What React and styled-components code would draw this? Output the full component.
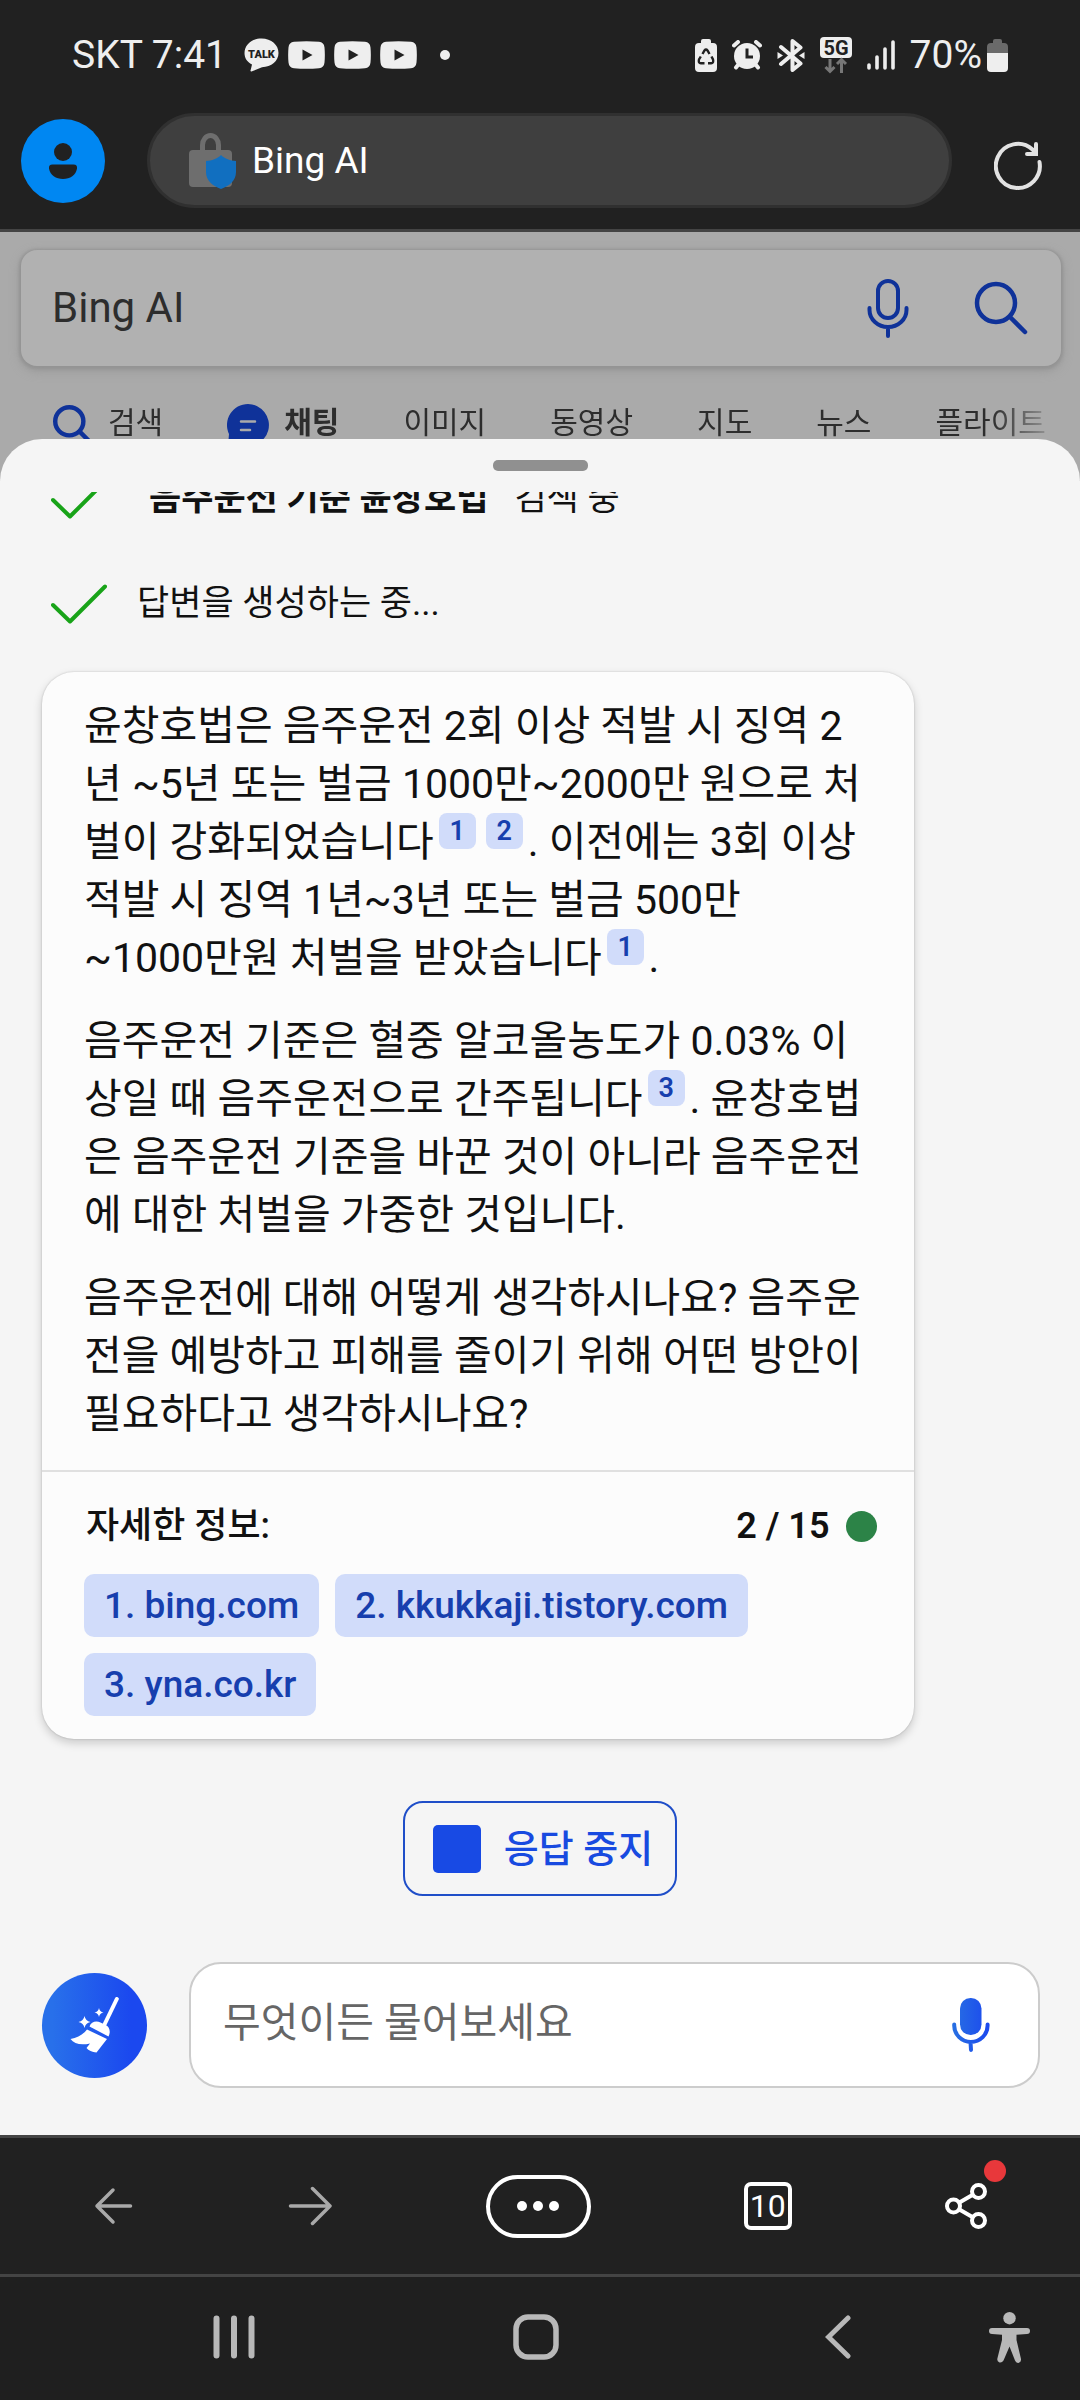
import styled, { createGlobalStyle } from "styled-components";

const GlobalStyle = createGlobalStyle`
  * {
    box-sizing: border-box;
  }

  body {
    margin: 0;
    background: #212121;
    font-family: Roboto, "Noto Sans CJK KR", sans-serif;
  }

  button {
    padding: 0;
    border: none;
    background: none;
    font: inherit;
    color: inherit;
    cursor: pointer;
  }

  svg {
    display: block;
    flex-shrink: 0;
  }
`;

const Screen = styled.div`
  display: flex;
  flex-direction: column;
  height: 100vh;
  overflow: hidden;
`;

const Header = styled.header`
  background: #212121;
  border-bottom: 3px solid #444444;
`;

const StatusBar = styled.div`
  display: flex;
  align-items: center;
  justify-content: space-between;
  height: 110px;
  padding: 0 72px;
  color: #eeeeee;
  font-size: 39px;
`;

const StatusGroup = styled.div`
  display: flex;
  align-items: center;
  gap: ${(props) => props.$gap}px;
`;

const Carrier = styled.span`
  margin-right: 8px;
`;

const Dot = styled.span`
  width: ${(props) => props.$size}px;
  height: ${(props) => props.$size}px;
  border-radius: 50%;
  background: ${(props) => props.$color};
`;

const MoreDot = styled(Dot)`
  margin-left: 14px;
`;

const AddressBar = styled.div`
  display: flex;
  align-items: center;
  gap: 42px;
  padding: 3px 38px 21px 21px;
`;

const Avatar = styled.button`
  display: flex;
  align-items: center;
  justify-content: center;
  width: 84px;
  height: 84px;
  border-radius: 50%;
  background: #0087f2;
`;

const Address = styled.button`
  display: flex;
  flex: 1;
  align-items: center;
  gap: 16px;
  height: 95px;
  padding: 0 39px;
  border: 3px solid #303030;
  border-radius: 48px;
  background: #3f3f3f;
  color: #ffffff;
  font-size: 37px;
`;

const RefreshButton = styled.button`
  padding-top: 9px;
`;

const SearchPage = styled.section`
  padding: 18px 19px 0 21px;
  background: #aaaaaa;
`;

const SearchForm = styled.form`
  display: flex;
  align-items: center;
  height: 116px;
  padding: 0 33px 0 31px;
  border-radius: 16px;
  background: #b1b1b1;
  box-shadow: 0 1px 3px 2px #949494, 0 4px 12px #969696;
`;

const SearchInput = styled.input`
  flex: 1;
  min-width: 0;
  padding: 0 0 2px;
  border: none;
  outline: none;
  background: none;
  color: #2d2d2d;
  font: inherit;
  font-size: 42px;
`;

const SearchButtons = styled.div`
  display: flex;
  align-items: center;
  gap: 65px;
`;

const Tabs = styled.nav`
  display: flex;
  align-items: center;
  gap: 64px;
  height: 114px;
  padding: 0 15px 0 32px;
  overflow: hidden;
  mask-image: linear-gradient(to right, #000 calc(100% - 70px), transparent);
`;

const Tab = styled.a`
  display: flex;
  flex-shrink: 0;
  align-items: center;
  gap: ${(props) => props.$gap || 0}px;
  color: #2d2d2d;
  font-size: 30px;
  font-weight: ${(props) => (props.$active ? 700 : 400)};
  line-height: 40px;
  text-decoration: none;

  svg {
    margin-top: 4px;
  }
`;

const Sheet = styled.main`
  position: relative;
  display: flex;
  flex: 1;
  flex-direction: column;
  min-height: 0;
  margin-top: -41px;
  padding-top: 21px;
  border-radius: 42px 42px 0 0;
  background: #f5f5f5;
`;

const Handle = styled.div`
  align-self: center;
  width: 95px;
  height: 11px;
  margin-bottom: 21px;
  border-radius: 5px;
  background: #909090;
`;

const Conversation = styled.div`
  display: flex;
  flex: 1;
  flex-direction: column;
  justify-content: flex-end;
  min-height: 0;
  padding: 0 42px 42px;
  overflow: hidden;
`;

const Progress = styled.div`
  display: flex;
  flex-shrink: 0;
  align-items: center;
  gap: ${(props) => props.$gap}px;
  height: 105px;
  padding-left: 9px;
  color: #111111;
  font-size: 35px;
`;

const Answer = styled.article`
  width: 87.5%;
  flex-shrink: 0;
  margin-top: 20px;
  border-radius: 32px;
  background: #fcfcfc;
  box-shadow: 0 0 2px rgba(0, 0, 0, 0.2), 0 4px 10px rgba(0, 0, 0, 0.18);
`;

const AnswerBody = styled.div`
  padding: 25px 42px 27px;
  color: #111111;
`;

const Paragraph = styled.p`
  margin: 0 0 25px;
  font-size: 41px;
  line-height: 58px;
  word-break: break-all;

  &:last-child {
    margin-bottom: 0;
  }
`;

const Amount = styled.span`
  white-space: nowrap;
`;

const Citation = styled.a`
  display: inline-block;
  width: 37px;
  margin: 0 5px;
  border-radius: 8px;
  background: #d1dcfa;
  color: #173fae;
  font-size: 27px;
  font-weight: 600;
  line-height: 36px;
  text-align: center;
  text-decoration: none;
  vertical-align: top;
`;

const Sources = styled.footer`
  padding: 32px 37px 23px 42px;
  border-top: 2px solid #e0e0e0;
`;

const SourcesTitle = styled.div`
  display: flex;
  align-items: center;
  justify-content: space-between;
  margin-bottom: 26px;
  padding-left: 2px;
  color: #111111;
  font-size: 36px;
  font-weight: 500;
  line-height: 44px;
`;

const Counter = styled.span`
  display: flex;
  align-items: center;
  gap: 16px;
  font-weight: 600;
`;

const Chips = styled.div`
  display: flex;
  flex-wrap: wrap;
  gap: 16px;
`;

const Chip = styled.a`
  padding: 0 20px;
  border-radius: 10px;
  background: #d1dcfa;
  color: #173fae;
  font-size: 37px;
  font-weight: 500;
  line-height: 63px;
  text-decoration: none;
`;

const StopButton = styled.button`
  display: flex;
  flex-shrink: 0;
  align-self: center;
  align-items: center;
  gap: 23px;
  height: 95px;
  margin-top: 62px;
  padding: 0 22px 0 28px;
  border: 2px solid #1f4ec8;
  border-radius: 20px;
  color: #184ae0;
  font-size: 38px;
  font-weight: 500;
  line-height: 48px;
`;

const StopSquare = styled.span`
  width: 48px;
  height: 48px;
  border-radius: 5px;
  background: #184ae4;
`;

const Composer = styled.form`
  display: flex;
  align-items: center;
  gap: 42px;
  padding: 24px 40px 47px 42px;
`;

const BroomButton = styled.button`
  display: flex;
  align-items: center;
  justify-content: center;
  width: 105px;
  height: 105px;
  border-radius: 50%;
  background: linear-gradient(90deg, #2870ea 10%, #1b48ef 85%);
`;

const Prompt = styled.div`
  display: flex;
  flex: 1;
  align-items: center;
  height: 126px;
  padding: 0 48px 0 32px;
  border: 2px solid #cccccc;
  border-radius: 32px;
  background: #ffffff;
`;

const PromptInput = styled.input`
  flex: 1;
  min-width: 0;
  padding: 0 0 4px;
  border: none;
  outline: none;
  background: none;
  font: inherit;
  font-size: 41px;

  &::placeholder {
    color: #666666;
    opacity: 1;
  }
`;

const Toolbar = styled.nav`
  display: flex;
  align-items: center;
  justify-content: space-between;
  height: 139px;
  padding: 0 91px;
  border-top: 3px solid #444444;
  background: #212121;
`;

const MenuButton = styled.button`
  display: flex;
  align-items: center;
  justify-content: center;
  gap: 6px;
  width: 105px;
  height: 63px;
  border: 4px solid #ffffff;
  border-radius: 32px;
`;

const TabCount = styled.button`
  width: 48px;
  height: 48px;
  border: 4px solid #ffffff;
  border-radius: 7px;
  color: #ffffff;
  font-size: 32px;
  line-height: 40px;
`;

const ShareButton = styled.button`
  position: relative;
`;

const Badge = styled(Dot)`
  position: absolute;
  top: -23px;
  right: -17px;
`;

const SystemNav = styled.nav`
  display: flex;
  align-items: center;
  height: 126px;
  padding: 0 50px 3px 83px;
  border-top: 3px solid #444444;
  background: #1f1f1f;
`;

const NavButton = styled.button`
  display: flex;
  flex: 1;
  justify-content: center;
`;

const BLUE = "#0f3299";

function TalkIcon() {
  return (
    <svg width="35" height="34" viewBox="0 0 35 34" fill="#eeeeee">
      <path d="M17.500 0.500C27.500 0.500 34.500 7 34.500 15C34.500 23 27.500 29 18 29.200L7.500 33.500C6.500 33.500 6.200 32.500 6.800 31.500L8 26.500C3 24 0.500 20 0.500 15C0.500 7 7.500 0.500 17.500 0.500Z" />
      <text x="17.500" y="19.500" fill="#212121" fontSize="11" fontWeight="900" textAnchor="middle">
        TALK
      </text>
    </svg>
  );
}

function VideoIcon() {
  return (
    <svg width="37" height="28" viewBox="0 0 37 28">
      <path fill="#eeeeee" d="M6 0.800Q18.500-0.300 31 0.800Q36 1.200 36.500 6.500Q37.200 14 36.500 21.500Q36 26.800 31 27.200Q18.500 28.300 6 27.200Q1 26.800 0.500 21.500Q-0.200 14 0.500 6.500Q1 1.200 6 0.800Z" />
      <path fill="#212121" d="M14.500 8.500L24.500 14L14.500 19.500Z" />
    </svg>
  );
}

function BatterySaverIcon() {
  return (
    <svg width="22" height="33" viewBox="0 0 22 33">
      <path fill="#eeeeee" d="M6 4V2Q6 0 8 0H14Q16 0 16 2V4H18Q22 4 22 8V29Q22 33 18 33H4Q0 33 0 29V8Q0 4 4 4Z" />
      <g fill="none" stroke="#212121" strokeWidth="2.400">
        <path d="M7.500 15L9.500 11.500Q11 9.500 12.500 11.500L14.500 15" />
        <path d="M16.500 17.500L18 20.500Q19 24 16 24.300H13" />
        <path d="M9.500 24.300H6Q3 24 4 20.500L5.800 17.500" />
      </g>
    </svg>
  );
}

function AlarmIcon() {
  return (
    <svg width="30" height="30" viewBox="0 0 30 30">
      <circle cx="15" cy="16" r="13" fill="#eeeeee" />
      <g stroke="#eeeeee" strokeWidth="4" strokeLinecap="round">
        <path d="M2 5.500L6 2M28 5.500L24 2M6 25L4 27.500M24 25L26 27.500" />
      </g>
      <path d="M15 8.500V17H21" fill="none" stroke="#212121" strokeWidth="3" />
    </svg>
  );
}

function BluetoothIcon() {
  return (
    <svg width="28" height="33" viewBox="0 0 28 33">
      <path
        d="M4 8L23.500 24.500L15.500 31V2L23.500 8.500L4 25"
        fill="none"
        stroke="#eeeeee"
        strokeWidth="4"
        strokeLinecap="round"
        strokeLinejoin="round"
      />
      <path fill="#eeeeee" d="M0.500 13L6 16.500L0.500 20ZM27.500 13L22 16.500L27.500 20Z" />
    </svg>
  );
}

function NetworkIcon() {
  return (
    <svg width="32" height="37" viewBox="0 0 32 37">
      <rect width="32" height="21" rx="4" fill="#eeeeee" />
      <text x="16" y="17.500" fill="#212121" fontSize="20" fontWeight="700" textAnchor="middle">
        5G
      </text>
      <path
        d="M10 22V34M5.500 30L10 34.500L14.500 30M21.500 36V23M17 27L21.500 22.500L26 27"
        fill="none"
        stroke="#777777"
        strokeWidth="3"
      />
    </svg>
  );
}

function SignalIcon() {
  return (
    <svg width="28" height="30" viewBox="0 0 28 30" stroke="#eeeeee" strokeWidth="3.600" strokeLinecap="round">
      <path d="M2 25V28M10 17V28M18 9V28M26 2V28" />
    </svg>
  );
}

function BatteryIcon() {
  return (
    <svg width="21" height="33" viewBox="0 0 21 33">
      <path fill="#6a6a6a" d="M6 4V2Q6 0 8 0H13Q15 0 15 2V4H17Q21 4 21 8V14H0V8Q0 4 4 4Z" />
      <path fill="#eeeeee" d="M0 14H21V29Q21 33 17 33H4Q0 33 0 29Z" />
    </svg>
  );
}

function PersonIcon() {
  return (
    <svg width="30" height="36" viewBox="0 0 30 36" fill="#212121">
      <circle cx="15" cy="9" r="9" />
      <path d="M4.500 21.500H25.500Q29.500 21.500 29 25.500C28 32 22 36 15 36S2 32 1 25.500Q0.500 21.500 4.500 21.500Z" />
    </svg>
  );
}

function LockIcon() {
  return (
    <svg width="47" height="56" viewBox="0 0 47 56">
      <path d="M13.500 19V12A8 9.500 0 0 1 29.500 12V19" fill="none" stroke="#6e6e6e" strokeWidth="5" />
      <rect y="17" width="43" height="37" rx="4" fill="#6e6e6e" />
      <path d="M32 22C36 26 41 27.500 47 28V39C47 48 40 53 32 56C24 53 17 48 17 39V28C23 27.500 28 26 32 22Z" fill="#116fc0" />
    </svg>
  );
}

function RefreshIcon() {
  return (
    <svg width="48" height="50" viewBox="0 0 48 50" fill="none" stroke="#e2e2e2" strokeWidth="4" strokeLinecap="round">
      <path d="M45.500 22A22 22 0 1 1 38.500 9.500L42 13" />
      <path d="M42 4V14H33" />
    </svg>
  );
}

function MicIcon() {
  return (
    <svg width="42" height="59" viewBox="0 0 42 59" fill="none" stroke={BLUE} strokeWidth="4" strokeLinecap="round">
      <rect x="11" y="2" width="20" height="37" rx="10" />
      <path d="M2.500 29V31A18.500 17 0 0 0 39.500 31V29M21 48V57" />
    </svg>
  );
}

function SearchIcon({ size }) {
  return (
    <svg width={size} height={size} viewBox="0 0 54 54" fill="none" stroke={BLUE} strokeWidth={size < 54 ? 6 : 4.5} strokeLinecap="round">
      <circle cx="22" cy="22" r="19" />
      <path d="M36 36L51 51" />
    </svg>
  );
}

function ChatIcon() {
  return (
    <svg width="42" height="42" viewBox="0 0 42 42">
      <path d="M21 0A21 21 0 1 1 11 39.500L1 42L2 30A21 21 0 0 1 21 0Z" fill={BLUE} />
      <path d="M14 17.500H28M14 26H23" stroke="#aaaaaa" strokeWidth="2.500" strokeLinecap="round" />
    </svg>
  );
}

function CheckIcon() {
  return (
    <svg width="56" height="48" viewBox="0 0 56 48" fill="none" stroke="#18a318" strokeWidth="4" strokeLinecap="round" strokeLinejoin="round">
      <path d="M2 29L19 45.500L54 10.500" />
    </svg>
  );
}

function BroomIcon() {
  return (
    <svg width="50" height="56" viewBox="0 0 50 56" fill="#ffffff">
      <path d="M46.800 2L34.500 27.500" stroke="#ffffff" strokeWidth="4" strokeLinecap="round" />
      <path d="M19.500 29.500C21 24.500 26.500 23.500 30.500 25.500L36 28.200C39.500 30 41 34.500 38.500 39.500Z" />
      <path d="M17 32.500L37 42L26.500 55.500C22 55.300 18.500 53.500 16.500 51L20 46.500C11 48.500 4 47 0.500 42C7.500 41 13 37.500 17 32.500Z" />
      <path d="M14.500 19Q15.500 24 20.500 25Q15.500 26 14.500 31Q13.500 26 8.500 25Q13.500 24 14.500 19Z" />
      <path d="M29 11Q29.700 14.800 33.500 15.500Q29.700 16.200 29 20Q28.300 16.200 24.500 15.500Q28.300 14.800 29 11Z" />
    </svg>
  );
}

function VoiceIcon() {
  return (
    <svg width="38" height="54" viewBox="0 0 38 54">
      <defs>
        <linearGradient id="voice" x1="0" x2="38" y1="0" y2="0" gradientUnits="userSpaceOnUse">
          <stop stopColor="#2870e2" />
          <stop offset="1" stopColor="#1b48ef" />
        </linearGradient>
      </defs>
      <rect x="8" width="21.500" height="37" rx="10.500" fill="url(#voice)" />
      <path d="M2.200 26.500V27.500A16.700 16.500 0 0 0 35.600 27.500V26.500M18.500 44L19 52" fill="none" stroke="url(#voice)" strokeWidth="4" strokeLinecap="round" />
    </svg>
  );
}

function BackIcon() {
  return (
    <svg width="44" height="44" viewBox="0 0 44 44" fill="none" stroke="#a9a9a9" strokeWidth="3.500" strokeLinecap="round" strokeLinejoin="round">
      <path d="M39.500 22H6M22 6L6 22L22 38" />
    </svg>
  );
}

function ForwardIcon() {
  return (
    <svg width="44" height="44" viewBox="0 0 44 44" fill="none" stroke="#a9a9a9" strokeWidth="3.500" strokeLinecap="round" strokeLinejoin="round">
      <path d="M2.500 22H42M24.500 4.500L42 22L24.500 39.500" />
    </svg>
  );
}

function ShareIcon() {
  return (
    <svg width="44" height="46" viewBox="0 0 44 46" fill="none" stroke="#ffffff" strokeWidth="4">
      <circle cx="8.500" cy="23" r="6.500" />
      <circle cx="33.500" cy="8.500" r="6.500" />
      <circle cx="33.500" cy="37.500" r="6.500" />
      <path d="M14 19.800L27.800 11.800M14 26.200L27.800 34.200" />
    </svg>
  );
}

function RecentsIcon() {
  return (
    <svg width="42" height="44" viewBox="0 0 42 44" stroke="#b8b8b8" strokeWidth="6" strokeLinecap="round">
      <path d="M3.500 3.500V40.500M21 3.500V40.500M38.500 3.500V40.500" />
    </svg>
  );
}

function HomeIcon() {
  return (
    <svg width="46" height="46" viewBox="0 0 46 46" fill="none" stroke="#b8b8b8" strokeWidth="5.500">
      <rect x="3" y="3" width="40" height="40" rx="12" />
    </svg>
  );
}

function PreviousIcon() {
  return (
    <svg width="26" height="44" viewBox="0 0 26 44" fill="none" stroke="#b8b8b8" strokeWidth="5" strokeLinecap="round">
      <path d="M23 3L3.500 22L23 41" />
    </svg>
  );
}

function AccessibilityIcon() {
  return (
    <svg width="41" height="51" viewBox="0 0 41 51" fill="#b8b8b8">
      <circle cx="20.500" cy="6.200" r="6.200" />
      <path d="M3 16H38Q41 16 41 19Q41 22 38 22L27.500 22.700V28L32 47Q32.500 50 29.500 51Q27 51 26 48.500L20.500 34.500L14.500 48.500Q13 51 10.500 50.500Q7.500 49.500 8.500 46L13 28V22.700L3 22Q0 22 0 19Q0 16 3 16Z" />
    </svg>
  );
}

const tabs = ["이미지", "동영상", "지도", "뉴스", "플라이트"];
const sources = ["bing.com", "kkukkaji.tistory.com", "yna.co.kr"];

export default function App() {
  return (
    <>
      <GlobalStyle />
      <Screen>
        <Header>
          <StatusBar>
            <StatusGroup $gap={9}>
              <Carrier>SKT 7:41</Carrier>
              <TalkIcon />
              <VideoIcon />
              <VideoIcon />
              <VideoIcon />
              <MoreDot $size={10} $color="#eeeeee" />
            </StatusGroup>
            <StatusGroup $gap={15}>
              <BatterySaverIcon />
              <AlarmIcon />
              <BluetoothIcon />
              <NetworkIcon />
              <SignalIcon />
              <StatusGroup $gap={5}>
                <span>70%</span>
                <BatteryIcon />
              </StatusGroup>
            </StatusGroup>
          </StatusBar>
          <AddressBar>
            <Avatar aria-label="프로필">
              <PersonIcon />
            </Avatar>
            <Address>
              <LockIcon />
              Bing AI
            </Address>
            <RefreshButton aria-label="새로 고침">
              <RefreshIcon />
            </RefreshButton>
          </AddressBar>
        </Header>

        <SearchPage>
          <SearchForm>
            <SearchInput aria-label="검색어" defaultValue="Bing AI" />
            <SearchButtons>
              <button type="button" aria-label="음성 검색">
                <MicIcon />
              </button>
              <button type="button" aria-label="검색">
                <SearchIcon size={54} />
              </button>
            </SearchButtons>
          </SearchForm>
          <Tabs>
            <Tab href="#" $gap={15}>
              <SearchIcon size={40} />
              검색
            </Tab>
            <Tab href="#" $gap={15} $active>
              <ChatIcon />
              채팅
            </Tab>
            {tabs.map((tab) => (
              <Tab href="#" key={tab}>
                {tab}
              </Tab>
            ))}
          </Tabs>
        </SearchPage>

        <Sheet>
          <Handle />
          <Conversation>
            <Progress $gap={42}>
              <CheckIcon />
              <StatusGroup $gap={26}>
                <b>음주운전 기준 윤창호법</b>
                <span>검색 중</span>
              </StatusGroup>
            </Progress>
            <Progress $gap={30}>
              <CheckIcon />
              <span>답변을 생성하는 중...</span>
            </Progress>

            <Answer>
              <AnswerBody>
                <Paragraph>
                  윤창호법은 음주운전 2회 이상 적발 시 징역 2년 ~5년 또는 벌금
                  1000만~2000만 원으로 처벌이 강화되었습니다
                  <Citation href="#">1</Citation>
                  <Citation href="#">2</Citation>. 이전에는 3회 이상 적발 시 징역
                  1년~3년 또는 벌금 500만
                  <wbr />
                  <Amount>~1000만원</Amount> 처벌을 받았습니다
                  <Citation href="#">1</Citation>.
                </Paragraph>
                <Paragraph>
                  음주운전 기준은 혈중 알코올농도가 0.03% 이상일 때 음주운전으로
                  간주됩니다
                  <Citation href="#">3</Citation>. 윤창호법은 음주운전 기준을 바꾼
                  것이 아니라 음주운전에 대한 처벌을 가중한 것입니다.
                </Paragraph>
                <Paragraph>
                  음주운전에 대해 어떻게 생각하시나요? 음주운전을 예방하고 피해를
                  줄이기 위해 어떤 방안이 필요하다고 생각하시나요?
                </Paragraph>
              </AnswerBody>
              <Sources>
                <SourcesTitle>
                  자세한 정보:
                  <Counter>
                    2 / 15
                    <Dot $size={31} $color="#2c8347" />
                  </Counter>
                </SourcesTitle>
                <Chips>
                  {sources.map((source, i) => (
                    <Chip href="#" key={source}>
                      {i + 1}. {source}
                    </Chip>
                  ))}
                </Chips>
              </Sources>
            </Answer>

            <StopButton>
              <StopSquare />
              응답 중지
            </StopButton>
          </Conversation>

          <Composer>
            <BroomButton type="button" aria-label="새 토픽">
              <BroomIcon />
            </BroomButton>
            <Prompt>
              <PromptInput aria-label="메시지" placeholder="무엇이든 물어보세요" />
              <button type="button" aria-label="음성 입력">
                <VoiceIcon />
              </button>
            </Prompt>
          </Composer>
        </Sheet>

        <Toolbar>
          <button aria-label="뒤로">
            <BackIcon />
          </button>
          <button aria-label="앞으로">
            <ForwardIcon />
          </button>
          <MenuButton aria-label="메뉴">
            <Dot $size={10} $color="#ffffff" />
            <Dot $size={10} $color="#ffffff" />
            <Dot $size={10} $color="#ffffff" />
          </MenuButton>
          <TabCount>10</TabCount>
          <ShareButton aria-label="공유">
            <ShareIcon />
            <Badge $size={22} $color="#e8383b" />
          </ShareButton>
        </Toolbar>

        <SystemNav>
          <NavButton aria-label="최근 앱">
            <RecentsIcon />
          </NavButton>
          <NavButton aria-label="홈">
            <HomeIcon />
          </NavButton>
          <NavButton aria-label="이전">
            <PreviousIcon />
          </NavButton>
          <button aria-label="접근성">
            <AccessibilityIcon />
          </button>
        </SystemNav>
      </Screen>
    </>
  );
}
